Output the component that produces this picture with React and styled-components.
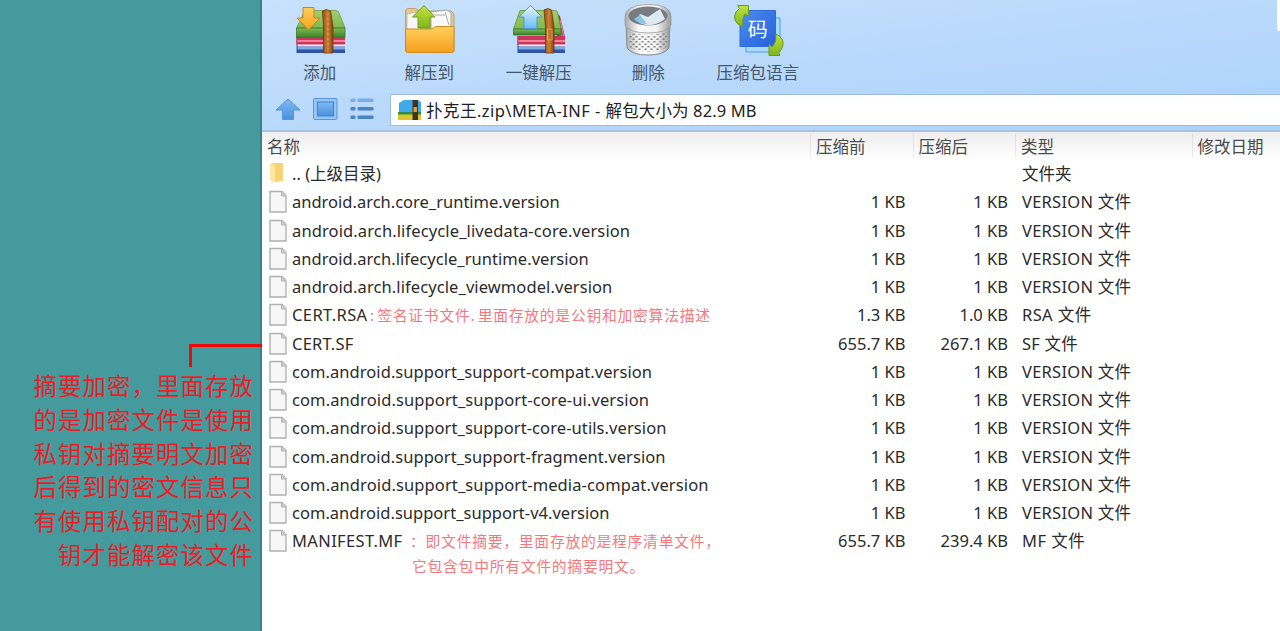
import React from 'react';
import styled, { createGlobalStyle } from 'styled-components';

const Global = createGlobalStyle`
  * { box-sizing: border-box; }
  body { margin: 0; overflow: hidden; background: #449a9c; }
`;
const Desktop = styled.div`
  display: flex; width: 1280px; height: 631px; overflow: hidden; background: #449a9c;
  font-family: 'Noto Sans', 'Noto Sans CJK SC', sans-serif; font-size: 16.5px; color: #2b2b2b;
`;
const Side = styled.aside`
  position: relative; width: 262px; flex: none; padding-top: 368px; padding-right: 6px;
  border-right: 2px solid #38808a; text-align: right;
`;
const SideLine = styled.div`
  height: 33.8px; line-height: 34px; font-size: 23.4px; letter-spacing: 1.1px; color: #ee1c24; white-space: nowrap;
  font-family: 'Noto Sans CJK SC', sans-serif; font-weight: 400;
`;
const Connector = styled.div`
  position: absolute; left: 189px; top: 344px; width: 73px; height: 23px;
  border-top: 3px solid #f00808; border-left: 3px solid #f00808;
`;
const Win = styled.main`flex: 1; display: flex; flex-direction: column; background: #fff; min-width: 0;`;
const Top = styled.header`
  position: relative; height: 132px; flex: none; background: linear-gradient(173deg, #c8e1fc 0%, #bbdafb 45%, #abd2fb 100%);
  border-bottom: 2px solid #a9c3e2; overflow: hidden;
`;
const Corner = styled.div`
  position: absolute; right: 0; top: 0; width: 3px; height: 31px; background: #fff; border-bottom-left-radius: 3px;
`;
const Tools = styled.div`display: flex; height: 94px; padding-left: 3px;`;
const Tool = styled.div`
  width: 109.5px; display: flex; flex-direction: column; align-items: center; padding-top: 3px; color: #43566b; flex: none;
  svg { width: 56px; height: 56px; }
  span { line-height: 24px; margin-top: 2px; font-size: 16.5px; white-space: nowrap; }
`;
const Nav = styled.div`display: flex; align-items: center; height: 32px;`;
const NavIcons = styled.div`width: 128px; height: 32px; svg { display: block; }`;
const Address = styled.div`
  flex: 1; height: 32px; background: #fff; border: 1px solid #9dbbdc; border-right: 0; display: flex; align-items: center; padding-left: 7px;
  color: #222; white-space: pre; svg { margin-right: 4px; }
`;
const cols = 'grid-template-columns: 549px 102.5px 102.5px 176.5px 1fr;';
const Head = styled.div`
  display: grid; ${cols} height: 28px; flex: none; color: #4a4a4a;
  background: linear-gradient(#eeeeee, #fff);
`;
const HeadCell = styled.div`
  line-height: 29px; padding-left: 5px; background: linear-gradient(#dcdcdc, #ededed) right 2px / 1px 24px no-repeat;
  &:last-child { background: none; }
`;
const Row = styled.div`display: grid; ${cols} height: 28.25px; line-height: 28px; flex: none; white-space: pre;`;
const Name = styled.div`display: flex; padding-left: 7px; svg { flex: none; margin: 2px 5px 0 0; }`;
const Label = styled.span`letter-spacing: ${p => p.$ls || 0}px;`;
const Size = styled.div`text-align: right; padding-right: 8px;`;
const Kind = styled.div`padding-left: 6px; letter-spacing: ${p => p.$ls || 0}px;`;
const Note = styled.span`
  color: #f7787b; font-family: 'Noto Sans CJK SC', sans-serif; font-weight: 400; font-size: 14.8px; margin-left: ${p => p.$ml}px;
  letter-spacing: 0.74px; word-spacing: ${p => p.$ws || 0}px; line-height: ${p => p.$lh || 28}px;
`;
const NoteLine = styled.div`padding-left: 150px; line-height: 20px; height: 20px;`;

const Page = () => (
  <svg width="18" height="23" viewBox="0 0 18 23"><path d="M1 1.5H13L17 5.5V22H1Z" fill="#f7f7f7" stroke="#b0b0b0" strokeWidth="1.4" /><path d="M12.5 1.5V6H17" fill="#cfcfcf" stroke="#b0b0b0" /></svg>
);
const Folder = () => (
  <svg width="18" height="22" viewBox="0 0 18 22"><path d="M1 2L6 1H14V19L5 20L1 18.5Z" fill="#f9d273" /><path d="M1 2L6 4V20L1 18.5Z" fill="#ffe7a0" /></svg>
);
const Zip = () => (
  <svg width="24" height="22" viewBox="0 0 24 22"><path d="M1 4L6 1H20L23 3V14H1Z" fill="#3fa9ea" /><path d="M0 13H23V16H0Z" fill="#2f8f4a" /><path d="M0 15.5H23V21H0Z" fill="#dfc42c" /><path d="M14.5 1H20V21H14.5Z" fill="#47301c" /><path d="M15.5 8H19V13H15.5Z" fill="#e79b2d" /></svg>
);
const Defs = () => (
  <defs>
    <linearGradient id="green" x2="0" y2="1"><stop stopColor="#a4cf6b" /><stop offset="1" stopColor="#7fb851" /></linearGradient>
    <linearGradient id="lip" x2="0" y2="1"><stop stopColor="#7fbb50" /><stop offset="1" stopColor="#37802a" /></linearGradient>
    <linearGradient id="gold" x2="0" y2="1"><stop stopColor="#ffd05c" /><stop offset="1" stopColor="#f6a01f" /></linearGradient>
    <linearGradient id="sky" x2="0" y2="1"><stop stopColor="#e6f7ff" /><stop offset="1" stopColor="#6bbcf5" /></linearGradient>
    <linearGradient id="lime" x2="0" y2="1"><stop stopColor="#c4e23c" /><stop offset="1" stopColor="#7fb51f" /></linearGradient>
    <linearGradient id="belt"><stop stopColor="#8f4d18" /><stop offset=".5" stopColor="#cc8136" /><stop offset="1" stopColor="#864312" /></linearGradient>
    <linearGradient id="blue" x2="1" y2="1"><stop stopColor="#4d8df0" /><stop offset="1" stopColor="#2460dc" /></linearGradient>
    <linearGradient id="nav" x2="0" y2="1"><stop stopColor="#7ebaf4" /><stop offset="1" stopColor="#4a90dc" /></linearGradient>
    <linearGradient id="steel"><stop stopColor="#aaa" /><stop offset=".3" stopColor="#fafafa" /><stop offset=".7" stopColor="#f2f2f2" /><stop offset="1" stopColor="#999" /></linearGradient>
    <pattern id="mesh" width="6" height="5" patternUnits="userSpaceOnUse"><rect x=".4" y=".6" width="2.2" height="1.3" fill="#777" /><rect x="3.4" y="3.1" width="2.2" height="1.3" fill="#777" /></pattern>
  </defs>
);
const Stripes = ({ x, right }) => (
  <>
    <path d={`M${x} 33H${right}V50H${x}Z`} fill="#2c55a6" />
    <path d={`M${x + 1} 44H${right}V46.5H${x + 1}Z`} fill="#7fa9e4" />
    <path d={`M${x} 33H${right}V42H${x}Z`} fill="#c9365c" />
    <path d={`M${x + 1} 37H${right}V39H${x + 1}Z`} fill="#f37f97" />
    <path d={`M${x + 1} 41.5H${right}V43.5H${x + 1}Z`} fill="#eef0f6" />
  </>
);
const AddIcon = () => (
  <svg viewBox="0 0 56 56">
    <Stripes x={4.5} right={53} />
    <path d="M13 7.5H44Q46 7.5 47 10L53 25H4.5Z" fill="url(#green)" stroke="#6d9c48" strokeWidth=".8" />
    <path d="M4.5 25H53V34.5H4.5Z" fill="url(#lip)" stroke="#377528" strokeWidth=".8" />
    <path d="M30.5 8Q34 5 38.5 8L41 24V50H31.5V24Z" fill="url(#belt)" stroke="#713709" strokeWidth=".8" />
    <path d="M36 10V46" stroke="#dda05a" strokeDasharray="2 3" />
    <path d="M11 4.5H22V15H28L16.5 27L5 15H11Z" fill="url(#gold)" stroke="#c98424" />
  </svg>
);
const OneKeyIcon = () => (
  <svg viewBox="0 0 56 56">
    <path d="M44 9L49 13L54 34V50H46V28Z" fill="#b5334e" /><path d="M49 17L53 35M48 22L52 41" stroke="#ee8b9c" />
    <Stripes x={6.5} right={54} />
    <path d="M9 7.5H44Q46 7.5 46.5 9L50 26H2.5Z" fill="url(#green)" stroke="#5b9140" strokeWidth=".8" />
    <path d="M2.5 26H50V32H2.5Z" fill="url(#lip)" stroke="#377528" strokeWidth=".8" />
    <path d="M33 7Q37 4 40.5 7L43 24V50H34.5V24Z" fill="url(#belt)" stroke="#713709" strokeWidth=".8" />
    <path d="M36.5 26H41V37H36.5Z" fill="none" stroke="#e2a454" />
    <path d="M19.5 2.5L31 14H26V25.5H13V14H8Z" fill="url(#sky)" stroke="#4b97d8" />
  </svg>
);
const ExtractIcon = () => (
  <svg viewBox="0 0 56 56">
    <path d="M4.5 8Q5 5.5 7 5.5H15L18 8H50L53 11V48H4.5Z" fill="#e9c987" stroke="#b59455" strokeWidth=".8" />
    <path d="M6 11L20 8V28H6Z" fill="#f7f7f7" stroke="#aaa" strokeWidth=".7" />
    <path d="M30 9L46 7L50 10V26H30Z" fill="#fafafa" stroke="#999" strokeWidth=".8" /><path d="M34 12H44M44 9L48 22" stroke="#aaa" />
    <path d="M4.5 26H31L35 23.5H52Q53 23.5 53 25V47Q53 49.5 51 49.5H6.5Q4.5 49.5 4.5 47Z" fill="url(#gold)" stroke="#d08b20" />
    <path d="M23 2.5L34 14H29V25H17V14H11.5Z" fill="url(#lime)" stroke="#6f9c25" />
  </svg>
);
const BinIcon = () => (
  <svg viewBox="0 0 56 56">
    <path d="M6 18L7 45Q12 52 28 52T49 45L50 18Z" fill="url(#steel)" stroke="#8a8a8a" />
    <path d="M9 29L10 45Q28 52 46 45L47 29Q28 35 9 29Z" fill="url(#mesh)" />
    <path d="M5 14Q5 2 28 1.5T51 14V22Q47 30 28 30T5 22Z" fill="url(#steel)" stroke="#999" strokeWidth=".8" />
    <ellipse cx="28" cy="13" rx="19.5" ry="9.5" fill="#777c82" />
    <path d="M17 17L20 11L28 14L40 6L45 16Q36 23 26 22Q19 21 17 17Z" fill="#dcebf3" /><path d="M14 16L20 12L27 21Q18 21 14 16Z" fill="#8cc6e4" />
  </svg>
);
const CodeIcon = () => (
  <svg viewBox="0 0 56 56">
    <path d="M16 15H50V49H16Z" fill="#a9dcfb" stroke="#4d9be6" />
    <path d="M10 7.5H45.5V43.5H10Z" fill="url(#blue)" stroke="#2e6cdc" />
    <text x="27.7" y="33.5" fontSize="20" textAnchor="middle" fill="#fff">码</text>
    <path d="M7.5 2.5H18.5V13L15 11Q12 15 12.5 23.5Q5 21 4.5 14Q5 8 9.5 5.5Z" fill="url(#lime)" stroke="#6b9a22" />
    <path d="M50 52.5H39V41.5L42.5 44Q47 38 46 31Q54 35 53 42Q52 47 48.5 49.5Z" fill="url(#lime)" stroke="#6b9a22" />
  </svg>
);
const NavArt = () => (
  <svg width="128" height="32" viewBox="0 0 128 32"><Defs />
    <path d="M26 5L38 16H31.5V25.5H20.5V16H14Z" fill="url(#nav)" stroke="#5595dc" />
    <rect x="51.5" y="4.5" width="23.5" height="21" rx="1" fill="#93c4f5" stroke="#5a98da" /><rect x="55.5" y="8" width="16" height="14" fill="url(#nav)" stroke="#4282cb" />
    {[4.5, 13, 21.5].map(y => <g key={y} fill={y < 10 ? '#79aee6' : '#4b84c4'}><rect x="88.5" y={y} width="5" height="3.6" rx="1" /><rect x="95.5" y={y} width="16" height="3.6" rx="1" /></g>)}
  </svg>
);

const tools = [[AddIcon, '添加'], [ExtractIcon, '解压到'], [OneKeyIcon, '一键解压'], [BinIcon, '删除'], [CodeIcon, '压缩包语言']];
const version = (name, ls) => ({ name, ls, before: '1 KB', after: '1 KB', kind: 'VERSION 文件', kls: 0.25 });
const rows = [
  version('android.arch.core_runtime.version', 0),
  version('android.arch.lifecycle_livedata-core.version', 0.12),
  version('android.arch.lifecycle_runtime.version', 0.04),
  version('android.arch.lifecycle_viewmodel.version', 0.09),
  { name: 'CERT.RSA', ls: 0.4, before: '1.3 KB', after: '1.0 KB', kind: 'RSA 文件', kls: 0.4, note: <Note $ml={2.5} $ws={-1.7}>: 签名证书文件. 里面存放的是公钥和加密算法描述</Note> },
  { name: 'CERT.SF', ls: 0.2, before: '655.7 KB', after: '267.1 KB', kind: 'SF 文件', kls: 0.2 },
  version('com.android.support_support-compat.version', 0.06),
  version('com.android.support_support-core-ui.version', 0.11),
  version('com.android.support_support-core-utils.version', 0.09),
  version('com.android.support_support-fragment.version', 0.05),
  version('com.android.support_support-media-compat.version', 0.11),
  version('com.android.support_support-v4.version', 0.02),
  { name: 'MANIFEST.MF', ls: 0.36, before: '655.7 KB', after: '239.4 KB', kind: 'MF 文件', kls: 0.5, note: <Note $ml={7.5}>：即文件摘要，里面存放的是程序清单文件，</Note> },
];
const side = ['摘要加密，里面存放', '的是加密文件是使用', '私钥对摘要明文加密', '后得到的密文信息只', '有使用私钥配对的公', '钥才能解密该文件'];

export default function App() {
  return (
    <Desktop>
      <Global />
      <Side><Connector />{side.map(t => <SideLine key={t}>{t}</SideLine>)}</Side>
      <Win>
        <Top>
          <Corner />
          <Tools>{tools.map(([Icon, t]) => <Tool key={t}><Icon /><span>{t}</span></Tool>)}</Tools>
          <Nav>
            <NavIcons><NavArt /></NavIcons>
            <Address><Zip /><Label $ls={0.46}>{'扑克王.zip\\META-INF - '}</Label><Label $ls={0.12}>{'解包大小为 82.9 MB'}</Label></Address>
          </Nav>
        </Top>
        <Head>{['名称', '压缩前', '压缩后', '类型', '修改日期'].map(t => <HeadCell key={t}>{t}</HeadCell>)}</Head>
        <Row><Name><Folder /><Label>.. (上级目录)</Label></Name><Size /><Size /><Kind>文件夹</Kind></Row>
        {rows.map(r => (
          <Row key={r.name}>
            <Name><Page /><Label $ls={r.ls}>{r.name}</Label>{r.note}</Name>
            <Size>{r.before}</Size><Size>{r.after}</Size><Kind $ls={r.kls}>{r.kind}</Kind>
          </Row>
        ))}
        <NoteLine><Note $ml={0} $lh={20}>它包含包中所有文件的摘要明文。</Note></NoteLine>
      </Win>
    </Desktop>
  );
}
